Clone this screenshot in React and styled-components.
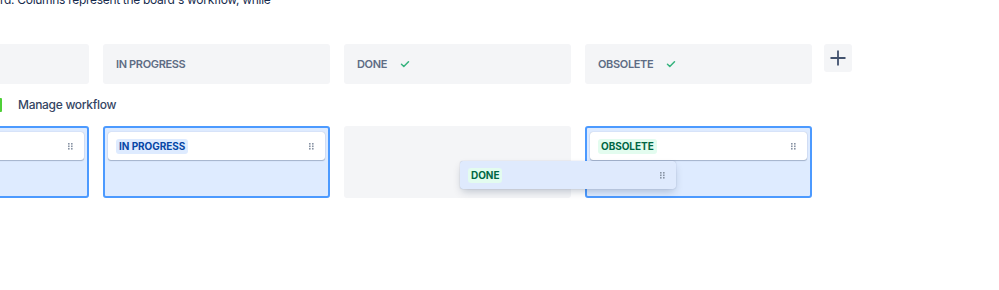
import React from "react";
import styled, { createGlobalStyle } from "styled-components";

const Global = createGlobalStyle`
  html, body { margin: 0; padding: 0; background: #fff; }
  body { font-family: Inter, "Noto Sans", sans-serif; -webkit-font-smoothing: antialiased; }
`;

const Page = styled.div`
  width: 999px;
  height: 290px;
  overflow: hidden;
  position: relative;
  display: flex;
  flex-direction: column;
`;

const Intro = styled.p`
  margin: -10px 0 0 0;
  font-size: 12px;
  letter-spacing: -0.3px;
  line-height: 20px;
  color: #172b4d;
  white-space: nowrap;
`;

const ColumnRow = styled.div`
  display: flex;
  gap: 14px;
  margin-left: -138px;
  align-items: flex-start;
  margin-top: ${(p) => p.$top}px;
`;

const HeaderCell = styled.div`
  width: 227px;
  height: 40px;
  box-sizing: border-box;
  flex: none;
  background: #f4f5f7;
  border-radius: 3px;
  display: flex;
  align-items: center;
  gap: 12px;
  padding: 0 13px;
  font-size: 11px;
  letter-spacing: -0.35px;
  font-weight: 600;
  color: #5e6c84;
  text-transform: uppercase;
`;

const AddButton = styled.button`
  width: 28px;
  height: 28px;
  margin-left: -2px;
  border: none;
  border-radius: 3px;
  background: #f4f5f7;
  padding: 0;
  display: flex;
  align-items: center;
  justify-content: center;
  color: #42526e;
`;

const ManageRow = styled.div`
  display: flex;
  align-items: center;
  height: 20px;
  margin-top: 11px;
  gap: 16px;
`;

const GreenMark = styled.span`
  width: 2px;
  height: 14px;
  background: #4fd038;
  border-radius: 0 1px 1px 0;
`;

const ManageText = styled.span`
  font-size: 12px;
  letter-spacing: -0.3px;
  line-height: 20px;
  font-weight: 500;
  color: #344563;
`;

const Column = styled.div`
  width: 227px;
  height: 72px;
  box-sizing: border-box;
  flex: none;
  border-radius: 3px;
  padding: 4px 3px;
  background: ${(p) => (p.$selected ? "#deebff" : "#f4f5f7")};
  border: 2px solid ${(p) => (p.$selected ? "#4c9aff" : "#f4f5f7")};
`;

const Card = styled.div`
  height: 28px;
  box-sizing: border-box;
  display: flex;
  align-items: center;
  justify-content: space-between;
  padding: 0 11px 0 8px;
  background: ${(p) => (p.$dragging ? "#dfeafd" : "#fff")};
  border-radius: 3px;
  box-shadow: ${(p) =>
    p.$dragging
      ? "0 4px 8px -2px rgba(9,30,66,0.25), 0 0 1px rgba(9,30,66,0.31)"
      : "0 1px 1px rgba(9,30,66,0.25), 0 0 1px rgba(9,30,66,0.31)"};
`;

const DragCard = styled(Card)`
  position: absolute;
  left: 460px;
  top: 161px;
  width: 216px;
`;

const Lozenge = styled.span`
  display: inline-flex;
  align-items: center;
  height: 15px;
  padding: 0 3px;
  border-radius: 3px;
  font-size: 10px;
  letter-spacing: -0.05px;
  font-weight: 700;
  text-transform: uppercase;
  background: ${(p) => (p.$tone === "green" ? "#e3fcef" : "#deebff")};
  color: ${(p) => (p.$tone === "green" ? "#006644" : "#0747a6")};
`;

const Check = () => (
  <svg width="12" height="12" viewBox="0 0 12 12" fill="none">
    <path d="M2.5 6.3l2.3 2.2 4.7-4.8" stroke="#36b37e" strokeWidth="1.5" strokeLinecap="round" strokeLinejoin="round" />
  </svg>
);

const Plus = () => (
  <svg width="16" height="16" viewBox="0 0 16 16">
    <path d="M8 0.5v15M0.5 8h15" stroke="currentColor" strokeWidth="1.8" />
  </svg>
);

const Handle = () => (
  <svg width="5" height="7" viewBox="0 0 5 7">
    {[0, 3].map((x) =>
      [0, 2.5, 5].map((y) => <rect key={`${x}-${y}`} x={x} y={y} width="1.6" height="1.6" fill="#8993a4" />)
    )}
  </svg>
);

const columns = [
  { title: "To do", check: false },
  { title: "In progress", check: false },
  { title: "Done", check: true },
  { title: "Obsolete", check: true },
];

const cardCols = [
  { label: "To do", tone: "blue", selected: true },
  { label: "In progress", tone: "blue", selected: true },
  null,
  { label: "Obsolete", tone: "green", selected: true },
];

export default function App() {
  return (
    <Page>
      <Global />
      <Intro>rd. Columns represent the board's workflow, while</Intro>
      <ColumnRow $top={34}>
        {columns.map((c) => (
          <HeaderCell key={c.title}>
            {c.title}
            {c.check && <Check />}
          </HeaderCell>
        ))}
        <AddButton aria-label="Add column">
          <Plus />
        </AddButton>
      </ColumnRow>
      <ManageRow>
        <GreenMark />
        <ManageText>Manage workflow</ManageText>
      </ManageRow>
      <ColumnRow $top={11}>
        {cardCols.map((c, i) =>
          c ? (
            <Column key={i} $selected={c.selected}>
              <Card>
                <Lozenge $tone={c.tone}>{c.label}</Lozenge>
                <Handle />
              </Card>
            </Column>
          ) : (
            <Column key={i} />
          )
        )}
      </ColumnRow>
      <DragCard $dragging>
        <Lozenge $tone="green">Done</Lozenge>
        <Handle />
      </DragCard>
    </Page>
  );
}
